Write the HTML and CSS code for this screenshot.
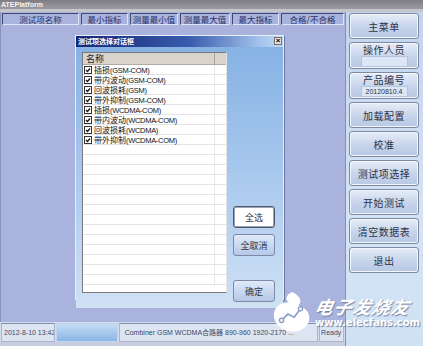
FILE: index.html
```html
<!DOCTYPE html>
<html>
<head>
<meta charset="utf-8">
<link rel="stylesheet" href="styles.css">
</head>
<body>
<div class="window">
  <div class="titlebar">ATEPlatform</div>
  <div class="band"></div>
  <div class="content">
    <div class="leftcol">
      <div class="main">
        <div class="thead">
          <div class="th w1">测试项名称</div>
          <div class="th w2">最小指标</div>
          <div class="th w3">测量最小值</div>
          <div class="th w4">测量最大值</div>
          <div class="th w5">最大指标</div>
          <div class="th w6">合格/不合格</div>
        </div>
      </div>
      <div class="statusbar">
        <div class="sc s1">2012-8-10 13:42</div>
        <div class="sc s2"></div>
        <div class="sc s3">Combiner GSM WCDMA合路器 890-960 1920-2170 ...</div>
        <div class="sc s4">Ready</div>
      </div>
    </div>
    <div class="side">
      <div class="btn">主菜单</div>
      <div class="btn field"><span>操作人员</span><div class="fieldbox"></div></div>
      <div class="btn field"><span>产品编号</span><div class="fieldbox">20120810.4</div></div>
      <div class="btn">加载配置</div>
      <div class="btn">校准</div>
      <div class="btn">测试项选择</div>
      <div class="btn">开始测试</div>
      <div class="btn">清空数据表</div>
      <div class="btn">退出</div>
    </div>
  </div>

  <div class="dialog">
    <div class="dtitle"><span>测试项选择对话框</span><span class="close">×</span></div>
    <div class="dbody">
      <div class="list">
        <div class="lhead"><div class="lh1">名称</div><div class="lh2"></div></div>
        <div class="row"><span class="cb"></span><span class="t">插损<small>(GSM-COM)</small></span></div>
        <div class="row"><span class="cb"></span><span class="t">带内波动<small>(GSM-COM)</small></span></div>
        <div class="row"><span class="cb"></span><span class="t">回波损耗<small>(GSM)</small></span></div>
        <div class="row"><span class="cb"></span><span class="t">带外抑制<small>(GSM-COM)</small></span></div>
        <div class="row"><span class="cb"></span><span class="t">插损<small>(WCDMA-COM)</small></span></div>
        <div class="row"><span class="cb"></span><span class="t">带内波动<small>(WCDMA-COM)</small></span></div>
        <div class="row"><span class="cb"></span><span class="t">回波损耗<small>(WCDMA)</small></span></div>
        <div class="row"><span class="cb"></span><span class="t">带外抑制<small>(WCDMA-COM)</small></span></div>
        <div class="row"></div><div class="row"></div><div class="row"></div>
        <div class="row"></div><div class="row"></div><div class="row"></div>
        <div class="row"></div><div class="row"></div><div class="row"></div>
        <div class="row"></div><div class="row"></div><div class="row"></div>
        <div class="row"></div><div class="row"></div>
      </div>
      <div class="dbtns">
        <div class="dbtn focus">全选</div>
        <div class="dbtn">全取消</div>
        <div class="dbtn last">确定</div>
      </div>
    </div>
  </div>

  <div class="watermark">
    <svg class="logo" width="42" height="42" viewBox="0 0 40 40">
      <path d="M21 1 C29 5 31 10 27 14 C35 16 39 22 37 29 C34 37 25 40 17 38 C8 36 2 28 4 20 C6 13 12 11 18 11 C14 8 15 4 21 1 Z" fill="#ffffff"/>
      <path d="M11 28 L17 22 L23 25 L29 17" fill="none" stroke="#8aa0c8" stroke-width="1.6"/>
      <circle cx="11" cy="28" r="2" fill="#fff" stroke="#8aa0c8" stroke-width="1.3"/>
      <circle cx="29" cy="17" r="2" fill="#fff" stroke="#8aa0c8" stroke-width="1.3"/>
    </svg>
    <div class="wtext">
      <div class="wcn">电子发烧友</div>
      <div class="wen">www.elecfans.com</div>
    </div>
  </div>
</div>
</body>
</html>
```
FILE: styles.css
```css
* { box-sizing: border-box; }
html, body { margin: 0; padding: 0; }
body {
  width: 423px; height: 346px; overflow: hidden;
  font-family: "Liberation Sans", "Noto Sans CJK SC", sans-serif;
  background: #9aa0b0;
}
.window { position: relative; width: 423px; height: 346px; display: flex; flex-direction: column; }
.titlebar {
  height: 9px; background: linear-gradient(#7e7e84, #9a9aa0);
  color: #f4f4f4; font-size: 7px; font-weight: bold; line-height: 9px; padding-left: 1px;
}
.band { height: 3px; background: #c4c6cc; }
.content { flex: 1; display: flex; }
.leftcol { width: 346px; display: flex; flex-direction: column; border-right: 1px solid #8890a8; background: #c8cee0; }
.main { flex: 1; background: #a9b3de; padding: 1px 0 0 1px; border-left: 1px solid #8a92b8; }
.thead { display: flex; gap: 2px; height: 12px; }
.th {
  background: #a9b3de; border: 1px solid #404a70; border-right-color: #dfe4f4; border-bottom-color: #dfe4f4;
  color: #2a3264; font-size: 8.5px; line-height: 10px; text-align: center; white-space: nowrap; overflow: hidden;
  font-family: "Noto Sans CJK SC", sans-serif;
}
.w1 { width: 77px; } .w2 { width: 47px; } .w3 { width: 48px; } .w4 { width: 50px; } .w5 { width: 47px; } .w6 { width: 63px; }
.statusbar { height: 20px; display: flex; gap: 1px; padding: 1px 1px 0 1px; background: #d4dcec; margin-bottom: 4px; }
.sc {
  height: 19px; border: 1px solid #aab4cc; border-top-color: #8090b0;
  font-size: 7px; line-height: 17px; color: #404860; padding-left: 2px; white-space: nowrap; overflow: hidden;
  background: #dde5f3; font-family: "Liberation Sans", "Noto Sans CJK SC", sans-serif;
}
.s1 { width: 54px; }
.s2 { width: 62px; background: linear-gradient(#c4dcf4, #8ab6e6); border-color: #c4d4ec; }
.s3 { width: 200px; padding-left: 5px; }
.s4 { width: 25px; padding-left: 1px; }
.side {
  flex: 1; background: linear-gradient(#c2d4ee, #d4e4f6 60%, #cfe2f4);
  padding: 1px 0 0 3px; display: flex; flex-direction: column; gap: 3px;
}
.btn {
  width: 70px; height: 26px; border: 1px solid #7d8aa2; border-radius: 3px;
  background: linear-gradient(#e6edf8, #c6d3ea 55%, #b8c8e4);
  box-shadow: inset 0 0 0 1px #f2f6fc;
  font-family: "Noto Sans CJK SC", sans-serif; font-size: 10px; color: #2c3448; letter-spacing: 0.5px;
  display: flex; align-items: center; justify-content: center;
}
.btn.field { flex-direction: column; justify-content: flex-start; padding-top: 1px; height: 27px; }
.btn.field span { line-height: 12px; }
.fieldbox {
  width: 47px; height: 11px; margin-top: 0; background: #dce6f4; border: 1px solid #b4c4dc;
  font-size: 7px; line-height: 9px; text-align: center; color: #2c3448; font-family: "Liberation Sans", sans-serif; letter-spacing: 0;
}
.dialog {
  position: absolute; left: 75px; top: 35px; width: 209px; height: 265px;
  border: 1px solid #e8eef8; display: flex; flex-direction: column;
  box-shadow: 1px 1px 0 #6a78a0;
}
.dtitle {
  height: 11px; background: linear-gradient(90deg, #142472, #3a5cae 55%, #a8c6ee 90%, #c4d8f2);
  color: #fff; font-size: 7px; font-weight: bold; line-height: 11px;
  display: flex; justify-content: space-between; padding: 0 1px 0 2px;
  font-family: "Noto Sans CJK SC", sans-serif;
}
.close {
  width: 8px; height: 8px; margin-top: 1px; background: #e4e4e4; border: 1px solid #707070;
  color: #000; font-size: 8px; line-height: 6px; text-align: center; font-family: "Liberation Sans", sans-serif;
}
.dbody {
  flex: 1; background: linear-gradient(#86b2e4, #a9c9ee 50%, #cfe1f4);
  display: flex; padding: 5px 0 0 6px; gap: 6px;
}
.list { width: 145px; height: 241px; background: #fff; border: 1px solid #7a7a80; border-right-color: #e4e4e4; overflow: hidden; }
.lhead { display: flex; height: 12px; background: #d8d4cc; border-bottom: 1px solid #b0aca4; }
.lh1 { width: 132px; border-right: 1px solid #a8a49c; font-family: "Noto Sans CJK SC", sans-serif; font-size: 9px; line-height: 11px; padding-left: 3px; color: #222; }
.lh2 { flex: 1; }
.row {
  height: 10px; border-bottom: 1px solid #e4e4e8; display: flex; align-items: center;
  padding-left: 1px;
  background: linear-gradient(90deg, transparent 131px, #e8e8e8 131px, #e8e8e8 132px, transparent 132px);
}
.t { font-family: "Noto Sans CJK SC", sans-serif; font-size: 8px; line-height: 9px; color: #111; white-space: nowrap; }
.t small { font-family: "Liberation Sans", sans-serif; font-size: 7.5px; letter-spacing: -0.3px; }
.cb {
  width: 8px; height: 8px; border: 1px solid #333; margin-right: 2px; flex: none;
  background: #fff url("data:image/svg+xml;utf8,<svg xmlns='http://www.w3.org/2000/svg' width='6' height='6'><path d='M1 3 L2.5 4.5 L5 1.5' fill='none' stroke='%23111' stroke-width='1.2'/></svg>") center/6px 6px no-repeat;
}
.dbtns { display: flex; flex-direction: column; padding-top: 154px; }
.dbtn {
  width: 42px; height: 22px; border: 1px solid #7c8aa6; border-radius: 3px;
  background: linear-gradient(#e0eaf8, #b4c8e8);
  font-family: "Noto Sans CJK SC", sans-serif; font-size: 9px; color: #2c3448;
  display: flex; align-items: center; justify-content: center; margin-bottom: 6px;
}
.dbtn.focus { background: #fff; border: 1px solid #505868; box-shadow: inset 0 0 0 1px #9aa4b8; }
.dbtn.last { margin-top: 18px; }
.watermark { position: absolute; left: 270px; top: 289px; display: flex; align-items: flex-start; gap: 3px; pointer-events: none; }
.logo { margin-top: 2px; }
.wtext { display: flex; flex-direction: column; padding-top: 7px; }
.wcn {
  font-family: "Noto Sans CJK SC", sans-serif; font-size: 18px; font-weight: bold; font-style: italic;
  color: #fff; letter-spacing: 1px; line-height: 21px; transform: skewX(-12deg);
  text-shadow: 1px 1px 1px #7080a0;
}
.wen {
  font-family: "DejaVu Sans", sans-serif; font-size: 10px; font-weight: bold; color: #fff;
  line-height: 12px; text-shadow: 1px 1px 1px #7080a0;
}
```
